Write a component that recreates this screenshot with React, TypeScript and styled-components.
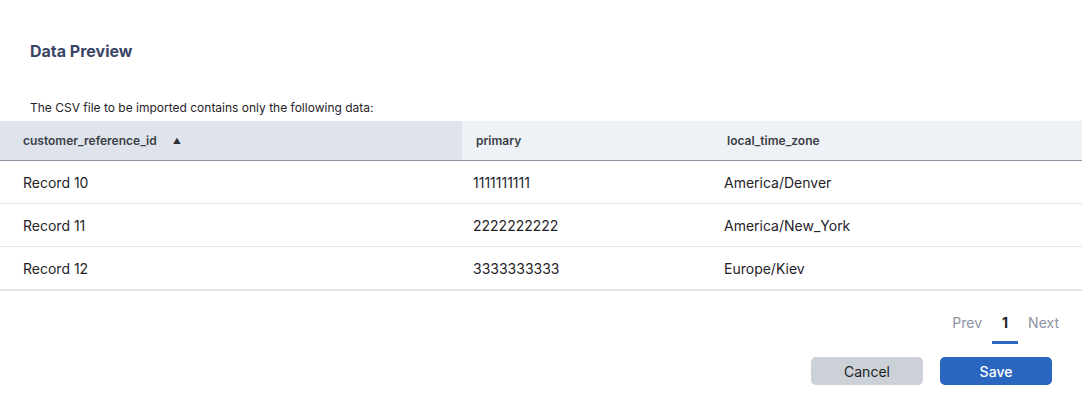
import styled, { createGlobalStyle } from "styled-components";

const GlobalStyle = createGlobalStyle`
    html, body {
        margin: 0;
        padding: 0;
        background: #ffffff;
        font-family: Inter, "Liberation Sans", sans-serif;
    }
`;

const Page = styled.div`
    width: 1082px;
    height: 404px;
    display: flex;
    flex-direction: column;
    overflow: hidden;
`;

const Title = styled.h2`
    margin: 41px 0 0 30px;
    font-size: 16px;
    line-height: 20px;
    font-weight: 700;
    color: #3a4664;
`;

const Intro = styled.p`
    margin: 39px 0 5px 30px;
    font-size: 12px;
    line-height: 16px;
    color: #1f2329;
`;

const Table = styled.table`
    width: 100%;
    border-collapse: collapse;
    table-layout: fixed;
    border-bottom: 2px solid #e1e4e9;
`;

const HeadCell = styled.th<{ $sorted?: boolean; $first?: boolean }>`
    height: 39px;
    padding: 0 0 0 ${(p) => (p.$first ? "23px" : "14px")};
    text-align: left;
    font-size: 12px;
    font-weight: 600;
    color: #3b3f46;
    background: ${(p) => (p.$sorted ? "#dfe3ec" : "#eef1f6")};
    border-bottom: 1px solid #8b94a3;
`;

const SortArrow = styled.span`
    margin-left: 16px;
    font-size: 8px;
    color: #2b2f36;
    vertical-align: 1px;
`;

const Cell = styled.td<{ $first?: boolean }>`
    height: 42px;
    padding: 0 0 0 ${(p) => (p.$first ? "23px" : "11px")};
    font-size: 14px;
    color: #1f2329;
    border-bottom: 1px solid #e3e6eb;
`;

const Footer = styled.div`
    display: flex;
    flex-direction: column;
    align-items: flex-end;
    padding: 20px 30px 0 0;
`;

const Pager = styled.div`
    display: flex;
    align-items: flex-start;
    margin-right: -17px;
`;

const PageLink = styled.span<{ $active?: boolean }>`
    font-size: 14px;
    line-height: 20px;
    padding: 2px 10px 8px;
    color: ${(p) => (p.$active ? "#1b1e23" : "#8d93a0")};
    font-weight: ${(p) => (p.$active ? 700 : 400)};
    border-bottom: 3px solid ${(p) => (p.$active ? "#2a66c0" : "transparent")};
    width: ${(p) => (p.$active ? "6px" : "auto")};
    text-align: center;
`;

const Actions = styled.div`
    display: flex;
    gap: 17px;
    margin-top: 13px;
`;

const Button = styled.button<{ $primary?: boolean }>`
    width: 112px;
    height: 28px;
    border: none;
    border-radius: 5px;
    font-family: Inter, "Liberation Sans", sans-serif;
    font-size: 14px;
    font-weight: ${(p) => (p.$primary ? 500 : 400)};
    color: ${(p) => (p.$primary ? "#ffffff" : "#1b1e23")};
    background: ${(p) => (p.$primary ? "#2a66bf" : "#ccd0d7")};
`;

const rows = [
    ["Record 10", "1111111111", "America/Denver"],
    ["Record 11", "2222222222", "America/New_York"],
    ["Record 12", "3333333333", "Europe/Kiev"],
];

export default function App() {
    return (
        <>
            <GlobalStyle />
            <Page>
                <Title>Data Preview</Title>
                <Intro>The CSV file to be imported contains only the following data:</Intro>
                <Table>
                    <colgroup>
                        <col style={{ width: 462 }} />
                        <col style={{ width: 251 }} />
                        <col />
                    </colgroup>
                    <thead>
                        <tr>
                            <HeadCell $sorted $first>
                                customer_reference_id<SortArrow>▲</SortArrow>
                            </HeadCell>
                            <HeadCell>primary</HeadCell>
                            <HeadCell>local_time_zone</HeadCell>
                        </tr>
                    </thead>
                    <tbody>
                        {rows.map((r) => (
                            <tr key={r[0]}>
                                <Cell $first>{r[0]}</Cell>
                                <Cell>{r[1]}</Cell>
                                <Cell>{r[2]}</Cell>
                            </tr>
                        ))}
                    </tbody>
                </Table>
                <Footer>
                    <Pager>
                        <PageLink>Prev</PageLink>
                        <PageLink $active>1</PageLink>
                        <PageLink>Next</PageLink>
                    </Pager>
                    <Actions>
                        <Button>Cancel</Button>
                        <Button $primary>Save</Button>
                    </Actions>
                </Footer>
            </Page>
        </>
    );
}
